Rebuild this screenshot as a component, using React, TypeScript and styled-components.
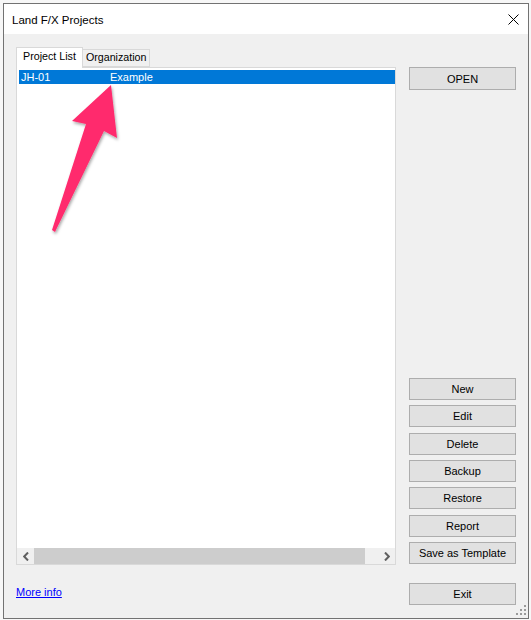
import React from "react";
import { styled, createGlobalStyle } from "styled-components";

const GlobalStyle = createGlobalStyle`
  html, body {
    margin: 0;
    padding: 0;
    background: #f7f7f7;
  }
  body {
    font-family: "Liberation Sans", Arial, sans-serif;
  }
`;

const Page = styled.div`
  position: relative;
  width: 531px;
  height: 620px;
  padding: 3px 0 0 3px;
  box-sizing: border-box;
`;

const Window = styled.div`
  width: 526px;
  height: 616px;
  box-sizing: border-box;
  border: 1px solid #727272;
  display: flex;
  flex-direction: column;
  background: #f0f0f0;
  position: relative;
`;

const TitleBar = styled.div`
  height: 30px;
  flex: none;
  background: #ffffff;
  display: flex;
  align-items: center;
  padding: 0 9px 0 8px;
`;

const Title = styled.div`
  flex: 1;
  font-size: 11.5px;
  color: #000;
  padding-top: 1px;
`;

const Body = styled.div`
  flex: 1;
  display: flex;
  gap: 13px;
  padding: 13px 12px 13px 12px;
  min-height: 0;
`;

const LeftCol = styled.div`
  width: 380px;
  display: flex;
  flex-direction: column;
`;

const TabStrip = styled.div`
  display: flex;
  align-items: flex-end;
  height: 20px;
  position: relative;
  z-index: 1;
`;

const Tab = styled.div<{ $active?: boolean }>`
  box-sizing: border-box;
  height: ${(p) => (p.$active ? "21px" : "18px")};
  margin-bottom: ${(p) => (p.$active ? "-1px" : "0")};
  padding: ${(p) => (p.$active ? "2px 6px 0 6px" : "1px 3px 0 3px")};
  border: 1px solid #d9d9d9;
  border-bottom: ${(p) => (p.$active ? "none" : "1px solid #d9d9d9")};
  margin-left: ${(p) => (p.$active ? "0" : "-1px")};
  background: ${(p) => (p.$active ? "#ffffff" : "#f0f0f0")};
  font-size: 10.7px;
  color: #000;
  white-space: nowrap;
`;

const Panel = styled.div`
  height: 498px;
  box-sizing: border-box;
  border: 1px solid #d9d9d9;
  background: #ffffff;
  display: flex;
  flex-direction: column;
`;

const List = styled.div`
  flex: 1;
  padding: 2px 0 0 2px;
`;

const Row = styled.div<{ $selected?: boolean }>`
  display: flex;
  height: 14px;
  align-items: center;
  background: ${(p) => (p.$selected ? "#0078d7" : "transparent")};
  color: ${(p) => (p.$selected ? "#ffffff" : "#000")};
  font-size: 11px;
`;

const Cell = styled.div<{ $width?: number }>`
  width: ${(p) => (p.$width ? `${p.$width}px` : "auto")};
  padding-left: 2px;
  white-space: nowrap;
`;

const ScrollBar = styled.div`
  height: 16px;
  flex: none;
  display: flex;
  background: #f0f0f0;
`;

const ScrollArrow = styled.div`
  width: 17px;
  display: flex;
  align-items: center;
  justify-content: center;
`;

const Thumb = styled.div`
  width: 331px;
  background: #cdcdcd;
`;

const Track = styled.div`
  flex: 1;
`;

const MoreInfo = styled.a`
  margin-top: 21px;
  font-size: 11px;
  color: #0000ff;
  text-decoration: underline;
  align-self: flex-start;
  cursor: pointer;
`;

const RightCol = styled.div`
  width: 107px;
  display: flex;
  flex-direction: column;
  padding-top: 20px;
`;

const ButtonGroup = styled.div`
  margin-top: auto;
  display: flex;
  flex-direction: column;
  gap: 5.33px;
`;

const Button = styled.button<{ $tall?: boolean }>`
  height: ${(p) => (p.$tall ? "23px" : "22px")};
  width: 107px;
  box-sizing: border-box;
  border: 1px solid #adadad;
  background: #e1e1e1;
  font-family: "Liberation Sans", Arial, sans-serif;
  font-size: 11px;
  color: #000;
  padding: 0;
`;

const ExitButton = styled(Button)`
  margin-top: 19px;
`;

const Grip = styled.svg`
  position: absolute;
  right: 0;
  bottom: 1px;
`;

const Annotation = styled.svg`
  position: absolute;
  left: 0;
  top: 0;
  pointer-events: none;
  overflow: visible;
`;

const Chevron = ({ dir }: { dir: "left" | "right" }) => (
  <svg width="6" height="9" viewBox="0 0 6 9">
    <path
      d={dir === "left" ? "M5 0.5 L1.2 4.5 L5 8.5" : "M1 0.5 L4.8 4.5 L1 8.5"}
      fill="none"
      stroke="#606060"
      strokeWidth="2"
    />
  </svg>
);

const buttons = ["New", "Edit", "Delete", "Backup", "Restore", "Report", "Save as Template"];

export default function App() {
  return (
    <Page>
      <GlobalStyle />
      <Window>
        <TitleBar>
          <Title>Land F/X Projects</Title>
          <svg width="11" height="11" viewBox="0 0 11 11">
            <path d="M0.5 0.5 L10.5 10.5 M10.5 0.5 L0.5 10.5" stroke="#000" strokeWidth="1" />
          </svg>
        </TitleBar>
        <Body>
          <LeftCol>
            <TabStrip>
              <Tab $active>Project List</Tab>
              <Tab>Organization</Tab>
            </TabStrip>
            <Panel>
              <List>
                <Row $selected>
                  <Cell $width={87}>JH-01</Cell>
                  <Cell>Example</Cell>
                </Row>
              </List>
              <ScrollBar>
                <ScrollArrow>
                  <Chevron dir="left" />
                </ScrollArrow>
                <Thumb />
                <Track />
                <ScrollArrow>
                  <Chevron dir="right" />
                </ScrollArrow>
              </ScrollBar>
            </Panel>
            <MoreInfo>More info</MoreInfo>
          </LeftCol>
          <RightCol>
            <Button $tall>OPEN</Button>
            <ButtonGroup>
              {buttons.map((b) => (
                <Button key={b}>{b}</Button>
              ))}
            </ButtonGroup>
            <ExitButton>Exit</ExitButton>
          </RightCol>
        </Body>
        <Grip width="12" height="12" viewBox="0 0 12 12">
          <g fill="#9a9a9a">
            <rect x="8" y="0" width="2" height="2" />
            <rect x="4" y="4" width="2" height="2" />
            <rect x="8" y="4" width="2" height="2" />
            <rect x="0" y="8" width="2" height="2" />
            <rect x="4" y="8" width="2" height="2" />
            <rect x="8" y="8" width="2" height="2" />
          </g>
        </Grip>
      </Window>
      <Annotation width="531" height="620">
        <defs>
          <filter id="sh" x="-50%" y="-50%" width="200%" height="200%">
            <feDropShadow dx="1" dy="2" stdDeviation="1.5" floodColor="#000" floodOpacity="0.35" />
          </filter>
        </defs>
        <polygon
          points="111,85 117,138 104,131 55,232 52,230 86,124 72,121"
          fill="#ff2a6d"
          filter="url(#sh)"
        />
      </Annotation>
    </Page>
  );
}
